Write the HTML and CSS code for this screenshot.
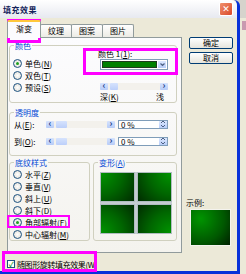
FILE: index.html
```html
<!DOCTYPE html>
<html lang="zh-CN">
<head>
    <meta charset="UTF-8">
    <title>填充效果</title>
    <link rel="stylesheet" href="styles.css">
</head>
<body>
<div class="back-window"><span class="back-close"></span></div>
<div class="window">
    <div class="titlebar">
        <span class="title">填充效果</span>
        <span class="close-btn">✕</span>
    </div>
    <div class="client">
        <div class="left-col">
            <!-- tabs -->
            <div class="tabs">
                <div class="tab active">渐变</div>
                <div class="tab">纹理</div>
                <div class="tab">图案</div>
                <div class="tab">图片</div>
            </div>
            <div class="panel">
                <fieldset class="group color-group">
                    <legend>颜色</legend>
                    <div class="radios">
                        <div class="radio"><span class="dot checked"></span>单色(<u>N</u>)</div>
                        <div class="radio"><span class="dot"></span>双色(<u>T</u>)</div>
                        <div class="radio"><span class="dot"></span>预设(<u>S</u>)</div>
                    </div>
                    <div class="color-pick">
                        <div class="pick-label">颜色 1(<u>1</u>):</div>
                        <div class="combo"><span class="swatch"></span><span class="combo-btn"><svg width="7" height="7" viewBox="0 0 7 7"><path d="M1.5 2.5 L3.5 4.5 L5.5 2.5" fill="none" stroke="#4d6185" stroke-width="1.2"/></svg></span></div>
                        <div class="slider long">
                            <span class="arrow">‹</span><span class="thumb"></span><span class="track"></span><span class="arrow">›</span>
                        </div>
                        <div class="slider-labels"><span>深(<u>K</u>)</span><span>浅</span></div>
                    </div>
                </fieldset>

                <fieldset class="group alpha-group">
                    <legend>透明度</legend>
                    <div class="alpha-row">
                        <span class="alpha-label">从(<u>E</u>):</span>
                        <div class="slider">
                            <span class="arrow">‹</span><span class="thumb"></span><span class="track"></span><span class="arrow">›</span>
                        </div>
                        <div class="spin"><span class="spin-val">0 %</span><span class="spin-btn"><svg width="6" height="8" viewBox="0 0 6 8"><path d="M1 3 L3 1 L5 3 M1 5 L3 7 L5 5" fill="none" stroke="#4d6185" stroke-width="1"/></svg></span></div>
                    </div>
                    <div class="alpha-row second">
                        <span class="alpha-label">到(<u>O</u>):</span>
                        <div class="slider">
                            <span class="arrow">‹</span><span class="thumb"></span><span class="track"></span><span class="arrow">›</span>
                        </div>
                        <div class="spin"><span class="spin-val">0 %</span><span class="spin-btn"><svg width="6" height="8" viewBox="0 0 6 8"><path d="M1 3 L3 1 L5 3 M1 5 L3 7 L5 5" fill="none" stroke="#4d6185" stroke-width="1"/></svg></span></div>
                    </div>
                </fieldset>

                <div class="bottom-row">
                    <fieldset class="group style-group">
                        <legend>底纹样式</legend>
                        <div class="radio"><span class="dot"></span>水平(<u>Z</u>)</div>
                        <div class="radio"><span class="dot"></span>垂直(<u>V</u>)</div>
                        <div class="radio"><span class="dot"></span>斜上(<u>U</u>)</div>
                        <div class="radio"><span class="dot"></span>斜下(<u>D</u>)</div>
                        <div class="radio"><span class="dot checked"></span>角部辐射(<u>F</u>)</div>
                        <div class="radio"><span class="dot"></span>中心辐射(<u>M</u>)</div>
                    </fieldset>
                    <fieldset class="group variant-group">
                        <legend>变形(<u>A</u>)</legend>
                        <div class="variants">
                            <div class="cell v1"></div>
                            <div class="cell v2"></div>
                            <div class="cell v3"></div>
                            <div class="cell v4"></div>
                        </div>
                    </fieldset>
                </div>
            </div>
            <div class="check-row"><span class="checkbox">✓</span>随图形旋转填充效果(<u>W</u>)</div>
        </div>

        <div class="right-col">
            <button class="btn">确定</button>
            <button class="btn">取消</button>
            <div class="sample-label">示例:</div>
            <div class="sample"></div>
        </div>
    </div>

    <!-- magenta annotation boxes -->
    <div class="hl hl-tab"></div>
    <div class="hl hl-color"></div>
    <div class="hl hl-corner"></div>
    <div class="hl hl-check"></div>
</div>
</body>
</html>
```

FILE: styles.css
```css
body {
    margin: 0;
    width: 246px;
    height: 274px;
    overflow: hidden;
    background-color: #d6d3cc;
    font-family: "Noto Sans CJK SC", "DejaVu Sans", sans-serif;
    font-size: 8px;
    color: #000;
    position: relative;
}
u {
    text-decoration: underline;
}
.back-window {
    position: absolute;
    top: 18px;
    left: 238px;
    width: 8px;
    height: 256px;
    border-left: 2px solid #3f5fc0;
    background-color: #ece9d8;
}
.back-close {
    position: absolute;
    top: 3px;
    left: 2px;
    width: 8px;
    height: 9px;
    background-color: #c99ab0;
}
.window {
    position: relative;
    width: 237px;
    height: 271px;
    background-color: #ece9d8;
    border-right: 3px solid #0831d9;
    border-bottom: 3px solid #0831d9;
    border-top-right-radius: 6px;
}

/* title bar */
.titlebar {
    height: 18px;
    display: flex;
    align-items: center;
    justify-content: space-between;
    padding: 0 3px 0 3px;
    background: linear-gradient(#ffffff, #e7e9f0);
    border-top-right-radius: 6px;
}
.title {
    font-weight: bold;
    font-size: 8px;
    color: #14235a;
    letter-spacing: 0.5px;
}
.close-btn {
    width: 12px;
    height: 12px;
    margin-right: 1px;
    border: 1px solid #fff;
    border-radius: 2px;
    background: linear-gradient(135deg, #f0906c, #d9482a);
    color: #fff;
    font-size: 9px;
    line-height: 12px;
    text-align: center;
    font-weight: bold;
}

.client {
    display: flex;
}
.left-col {
    width: 182px;
}

/* tabs */
.tabs {
    display: flex;
    align-items: flex-end;
    height: 19px;
    padding-left: 9px;
}
.tab {
    height: 12px;
    line-height: 12px;
    padding: 0 7px;
    border: 1px solid #919b9c;
    border-bottom: none;
    border-radius: 2px 2px 0 0;
    background: linear-gradient(#ffffff, #ecebe5);
    margin-right: -1px;
}
.tab.active {
    height: 16px;
    line-height: 14px;
    margin: 0 -1px -1px -2px;
    padding: 0 8px;
    background: #fcfcfe;
    border-top: 2px solid #ffc83c;
    position: relative;
    z-index: 1;
}

.panel {
    height: 211px;
    margin-left: 7px;
    border: 1px solid #919b9c;
    background: linear-gradient(#fcfcfe, #f4f3ee);
    padding: 3px 4px 0 1px;
}

/* group boxes */
.group {
    margin: 0;
    border: 1px solid #d0d0bf;
    border-radius: 3px;
    padding: 0 2px 0 3px;
    min-width: 0;
}
.group legend {
    padding: 0 1px;
    margin-left: 1px;
    line-height: 9px;
    color: #0046d5;
}
.color-group {
    display: flex;
    height: 62px;
    box-sizing: border-box;
}
.radios {
    width: 85px;
    padding-top: 7px;
}
.radio {
    display: flex;
    align-items: center;
    height: 12px;
    white-space: nowrap;
}
.dot {
    width: 7px;
    height: 7px;
    border: 1px solid #1c5180;
    border-radius: 50%;
    background: radial-gradient(#ffffff, #dcdad2);
    margin-right: 3px;
    display: flex;
    align-items: center;
    justify-content: center;
}
.dot.checked::after {
    content: "";
    width: 3px;
    height: 3px;
    border-radius: 50%;
    background: #21a121;
}

.color-pick {
    width: 72px;
}
.pick-label {
    height: 8px;
    line-height: 8px;
}
.combo {
    display: flex;
    height: 11px;
    margin: 1px 0 0 2px;
    width: 68px;
    border: 1px solid #7f9db9;
    background: #fff;
    box-sizing: border-box;
    padding: 1px;
}
.swatch {
    flex: 1;
    background: #008000;
    border: 1px solid #1e3c1e;
}
.combo-btn {
    width: 8px;
    display: flex;
    align-items: center;
    justify-content: center;
    background: linear-gradient(#dbe7fe, #b8cdf9);
    margin-left: 1px;
}

/* scroll-style sliders */
.slider {
    display: flex;
    height: 7px;
    width: 69px;
    background: #f3f1ec;
}
.slider.long {
    margin: 13px 0 0 2px;
    width: 68px;
}
.arrow {
    width: 8px;
    height: 7px;
    background: linear-gradient(#d6e3fd, #b6cbf8);
    color: #1b3f8a;
    font-size: 9px;
    font-weight: bold;
    line-height: 6px;
    text-align: center;
    border-radius: 1px;
}
.thumb {
    width: 8px;
    margin-left: 2px;
    background: linear-gradient(#d6e3fd, #bccffa);
    border-radius: 1px;
}
.slider .track {
    flex: 1;
}
.slider-labels {
    display: flex;
    justify-content: space-between;
    margin: 3px 6px 0 2px;
    line-height: 7px;
}

.alpha-group {
    margin-top: 5px;
    height: 48px;
    box-sizing: border-box;
}
.alpha-row {
    display: flex;
    align-items: center;
    height: 10px;
    margin-top: 2px;
    padding-left: 1px;
}
.alpha-row.second {
    margin-top: 7px;
}
.alpha-label {
    width: 30px;
}
.alpha-row .slider {
    margin-left: 2px;
}
.alpha-row .thumb {
    width: 11px;
}
.spin {
    display: flex;
    width: 50px;
    height: 9px;
    margin-left: 3px;
    border: 1px solid #7f9db9;
    background: #fff;
    box-sizing: border-box;
}
.spin-val {
    flex: 1;
    line-height: 7px;
    padding-left: 2px;
}
.spin-btn {
    width: 8px;
    display: flex;
    align-items: center;
    justify-content: center;
    background: linear-gradient(#dbe7fe, #b8cdf9);
}

.bottom-row {
    display: flex;
    gap: 3px;
    margin-top: 2px;
}
.style-group {
    width: 81px;
    height: 83px;
    box-sizing: border-box;
    padding-top: 1px;
}
.variant-group {
    width: 84px;
    height: 83px;
    box-sizing: border-box;
}
.variants {
    display: grid;
    grid-template-columns: 35px 35px;
    grid-template-rows: 30px 30px;
    gap: 2px;
    width: 72px;
    margin: 5px 0 0 3px;
    background: #c4ccd0;
}
.cell {
    border: 1px solid #b0bcc0;
}
.v1 { background: radial-gradient(circle at 0 0, #009400, #006600 50%, #002c00); }
.v2 { background: radial-gradient(circle at 100% 0, #009400, #006600 50%, #002c00); }
.v3 { background: radial-gradient(circle at 0 100%, #009400, #006600 50%, #002c00); }
.v4 { background: radial-gradient(circle at 100% 100%, #009400, #006600 50%, #002c00); }

.check-row {
    display: flex;
    align-items: center;
    height: 10px;
    margin-top: 6px;
    padding-left: 7px;
    white-space: nowrap;
    letter-spacing: -0.4px;
}
.checkbox {
    width: 6px;
    height: 6px;
    border: 1px solid #1c5180;
    background: #fff;
    color: #21a121;
    font-size: 7px;
    line-height: 6px;
    text-align: center;
    font-weight: bold;
    margin-right: 2px;
}

/* right column */
.right-col {
    width: 55px;
    display: flex;
    flex-direction: column;
}
.btn {
    width: 44px;
    height: 12px;
    margin-left: 7px;
    padding: 0;
    font-family: inherit;
    font-size: 8px;
    line-height: 10px;
    border: 1px solid #003c74;
    border-radius: 2px;
    background: linear-gradient(#ffffff, #e6e4dc);
}
.btn:first-child {
    margin-top: 19px;
}
.btn + .btn {
    margin-top: 3px;
}
.sample-label {
    margin-top: 134px;
    margin-left: 4px;
    line-height: 9px;
}
.sample {
    width: 41px;
    height: 37px;
    margin: 2px 0 0 8px;
    box-sizing: border-box;
    border: 1px solid #f4f3ee;
    background: radial-gradient(circle at 25% 25%, #009400, #005800 60%, #002000);
}

/* annotation boxes */
.hl {
    position: absolute;
    border: 3px solid #ff00ff;
    box-sizing: border-box;
}
.hl-tab { left: 7px; top: 19px; width: 34px; height: 24px; }
.hl-color { left: 83px; top: 48px; width: 95px; height: 27px; }
.hl-corner { left: 7px; top: 215px; width: 63px; height: 13px; border-width: 2px; }
.hl-check { left: 2px; top: 251px; width: 95px; height: 21px; }
```
